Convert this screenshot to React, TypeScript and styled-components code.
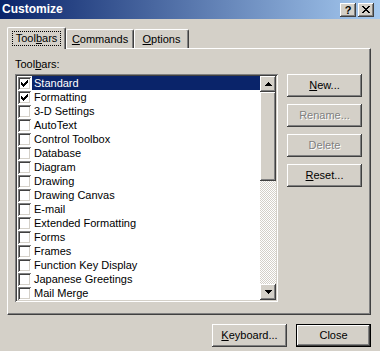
import React from "react";
import styled, { createGlobalStyle, css } from "styled-components";

const GlobalStyle = createGlobalStyle`
  html, body { margin: 0; padding: 0; background: #d4d0c8; }
  body { font-family: "Liberation Sans", Arial, sans-serif; font-size: 11px; color: #000; }
`;

const raised = css`
  box-shadow: inset -1px -1px #404040, inset 1px 1px #fff, inset -2px -2px #808080, inset 2px 2px #d4d0c8;
`;

const sunken = css`
  box-shadow: inset 1px 1px #808080, inset -1px -1px #fff, inset 2px 2px #404040, inset -2px -2px #d4d0c8;
`;

const Window = styled.div`
  width: 380px;
  height: 351px;
  background: #d4d0c8;
  display: flex;
  flex-direction: column;
  overflow: hidden;
`;

const TitleBar = styled.div`
  height: 19px;
  display: flex;
  align-items: center;
  padding: 0 6px 0 2px;
  background: linear-gradient(to right, #0a246a, #a6caf0);
`;

const Title = styled.span`
  flex: 1;
  color: #fff;
  font-weight: bold;
  font-size: 12px;
  line-height: 19px;
`;

const CaptionButton = styled.div`
  width: 16px;
  height: 14px;
  box-sizing: border-box;
  background: #d4d0c8;
  ${raised};
  display: flex;
  align-items: center;
  justify-content: center;
  font-weight: bold;
  font-size: 11px;
  line-height: 14px;
  margin-left: 2px;
`;

const Body = styled.div`
  padding: 8px 9px 0 7px;
  display: flex;
  flex-direction: column;
`;

const TabStrip = styled.div`
  display: flex;
  align-items: flex-end;
  height: 21px;
`;

const Tab = styled.div<{ $active?: boolean; $width: number }>`
  box-sizing: border-box;
  width: ${(p) => p.$width}px;
  height: ${(p) => (p.$active ? 22 : 19)}px;
  margin-bottom: ${(p) => (p.$active ? -1 : 0)}px;
  position: relative;
  z-index: ${(p) => (p.$active ? 1 : 0)};
  background: #d4d0c8;
  border-top: 1px solid #fff;
  border-left: 1px solid #fff;
  border-right: 1px solid #404040;
  border-radius: 2px 2px 0 0;
  box-shadow: inset -1px 0 #808080;
  display: flex;
  align-items: ${(p) => (p.$active ? "flex-start" : "center")};
  justify-content: center;
  padding-top: ${(p) => (p.$active ? 3 : 0)}px;
`;

const FocusText = styled.span<{ $focus?: boolean }>`
  padding: 0 3px;
  line-height: 13px;
  border: 1px dotted ${(p) => (p.$focus ? "#000" : "transparent")};
`;

const Panel = styled.div`
  box-sizing: border-box;
  height: 267px;
  border-top: 1px solid #fff;
  border-left: 1px solid #fff;
  border-right: 1px solid #404040;
  border-bottom: 1px solid #404040;
  box-shadow: inset -1px -1px #808080;
  padding: 9px 8px 0 7px;
`;

const FieldLabel = styled.div`
  line-height: 13px;
  margin-bottom: 3px;
`;

const PanelRow = styled.div`
  display: flex;
  align-items: flex-start;
  gap: 9px;
`;

const ListBox = styled.div`
  box-sizing: border-box;
  width: 263px;
  height: 228px;
  padding: 2px;
  background: #fff;
  ${sunken};
  display: flex;
`;

const Items = styled.div`
  flex: 1;
  overflow: hidden;
`;

const Row = styled.div`
  height: 14px;
  display: flex;
  align-items: center;
  padding-left: 1px;
`;

const Check = styled.div`
  box-sizing: border-box;
  width: 13px;
  height: 13px;
  background: #fff;
  ${sunken};
  display: flex;
  align-items: center;
  justify-content: center;
  flex: none;
`;

const ItemLabel = styled.div<{ $selected?: boolean }>`
  flex: 1;
  margin-left: 1px;
  padding-left: 2px;
  line-height: 14px;
  height: 14px;
  white-space: nowrap;
  background: ${(p) => (p.$selected ? "#0a246a" : "transparent")};
  color: ${(p) => (p.$selected ? "#fff" : "#000")};
`;

const ScrollBar = styled.div`
  width: 16px;
  display: flex;
  flex-direction: column;
  background: repeating-conic-gradient(#fff 0 25%, #d4d0c8 0 50%) 0 0 / 2px 2px;
`;

const ScrollButton = styled.div`
  box-sizing: border-box;
  width: 16px;
  height: 16px;
  background: #d4d0c8;
  ${raised};
  display: flex;
  align-items: center;
  justify-content: center;
  flex: none;
`;

const Thumb = styled.div`
  box-sizing: border-box;
  height: 89px;
  background: #d4d0c8;
  ${raised};
`;

const Track = styled.div`
  flex: 1;
`;

const ButtonColumn = styled.div`
  display: flex;
  flex-direction: column;
  gap: 7px;
`;

const Button = styled.div<{ $disabled?: boolean; $default?: boolean }>`
  box-sizing: border-box;
  width: 75px;
  height: 23px;
  background: #d4d0c8;
  display: flex;
  align-items: center;
  justify-content: center;
  line-height: 13px;
  ${(p) =>
    p.$default
      ? css`
          border: 1px solid #000;
          box-shadow: inset -1px -1px #404040, inset 1px 1px #fff, inset -2px -2px #808080;
        `
      : raised};
  color: ${(p) => (p.$disabled ? "#808080" : "#000")};
  text-shadow: ${(p) => (p.$disabled ? "1px 1px #fff" : "none")};
`;

const Footer = styled.div`
  display: flex;
  justify-content: flex-end;
  gap: 9px;
  margin-top: 9px;
`;

const CheckMark = () => (
  <svg width="7" height="7" viewBox="0 0 7 7" shapeRendering="crispEdges">
    <path d="M0 2h1v3h-1zM1 3h1v3h-1zM2 4h1v3h-1zM3 3h1v3h-1zM4 2h1v3h-1zM5 1h1v3h-1zM6 0h1v3h-1z" fill="#000" />
  </svg>
);

const Arrow = ({ down }: { down?: boolean }) => (
  <svg width="7" height="4" viewBox="0 0 7 4" shapeRendering="crispEdges">
    <path d={down ? "M0 0h7v1h-1v1h-1v1h-1v1h-1v-1h-1v-1h-1v-1h-1z" : "M3 0h1v1h1v1h1v1h1v1h-7v-1h1v-1h1v-1h1z"} fill="#000" />
  </svg>
);

const CloseGlyph = () => (
  <svg width="8" height="7" viewBox="0 0 8 7" shapeRendering="crispEdges">
    <path d="M0 0h2v1h-2zM6 0h2v1h-2zM1 1h2v1h-2zM5 1h2v1h-2zM2 2h4v1h-4zM3 3h2v1h-2zM2 4h4v1h-4zM1 5h2v1h-2zM5 5h2v1h-2zM0 6h2v1h-2zM6 6h2v1h-2z" fill="#000" />
  </svg>
);

const toolbars = [
  "Standard",
  "Formatting",
  "3-D Settings",
  "AutoText",
  "Control Toolbox",
  "Database",
  "Diagram",
  "Drawing",
  "Drawing Canvas",
  "E-mail",
  "Extended Formatting",
  "Forms",
  "Frames",
  "Function Key Display",
  "Japanese Greetings",
  "Mail Merge",
];

const checked = ["Standard", "Formatting"];

export default function App() {
  return (
    <>
      <GlobalStyle />
      <Window>
        <TitleBar>
          <Title>Customize</Title>
          <CaptionButton>?</CaptionButton>
          <CaptionButton>
            <CloseGlyph />
          </CaptionButton>
        </TitleBar>
        <Body>
          <TabStrip>
            <Tab $active $width={59}>
              <FocusText $focus>
                Tool<u>b</u>ars
              </FocusText>
            </Tab>
            <Tab $width={68}>
              <FocusText>
                <u>C</u>ommands
              </FocusText>
            </Tab>
            <Tab $width={55}>
              <FocusText>
                <u>O</u>ptions
              </FocusText>
            </Tab>
          </TabStrip>
          <Panel>
            <FieldLabel>
              Tool<u>b</u>ars:
            </FieldLabel>
            <PanelRow>
              <ListBox>
                <Items>
                  {toolbars.map((name, i) => (
                    <Row key={name}>
                      <Check>{checked.includes(name) && <CheckMark />}</Check>
                      <ItemLabel $selected={i === 0}>{name}</ItemLabel>
                    </Row>
                  ))}
                </Items>
                <ScrollBar>
                  <ScrollButton>
                    <Arrow />
                  </ScrollButton>
                  <Thumb />
                  <Track />
                  <ScrollButton>
                    <Arrow down />
                  </ScrollButton>
                </ScrollBar>
              </ListBox>
              <ButtonColumn>
                <Button>
                  <span>
                    <u>N</u>ew...
                  </span>
                </Button>
                <Button $disabled>Rename...</Button>
                <Button $disabled>Delete</Button>
                <Button>
                  <span>
                    <u>R</u>eset...
                  </span>
                </Button>
              </ButtonColumn>
            </PanelRow>
          </Panel>
          <Footer>
            <Button>
              <span>
                <u>K</u>eyboard...
              </span>
            </Button>
            <Button $default>Close</Button>
          </Footer>
        </Body>
      </Window>
    </>
  );
}
